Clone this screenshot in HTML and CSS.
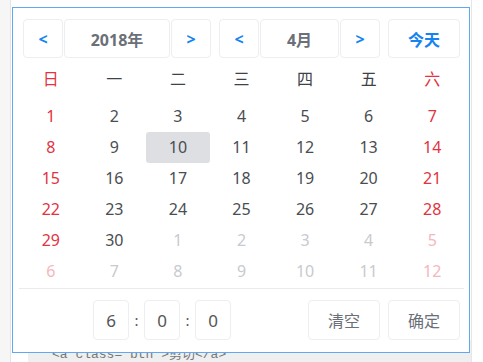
FILE: index.html
```html
<!DOCTYPE html>
<html lang="zh-CN">
<head>
    <meta charset="UTF-8">
    <meta name="viewport" content="width=device-width, initial-scale=1.0">
    <title>日期选择</title>
    <link rel="stylesheet" href="styles.css">
</head>
<body>
<div class="page">
    <div class="sidebar"></div>
    <div class="main">
        <pre class="code">&lt;a class="btn"&gt;剪切&lt;/a&gt;</pre>
    </div>
</div>

<div class="picker">
    <div class="picker-head">
        <div class="group">
            <button class="btn arrow">&lt;</button>
            <button class="btn year">2018年</button>
            <button class="btn arrow">&gt;</button>
        </div>
        <div class="group">
            <button class="btn arrow">&lt;</button>
            <button class="btn month">4月</button>
            <button class="btn arrow">&gt;</button>
        </div>
        <button class="btn today">今天</button>
    </div>

    <div class="week">
        <span class="red">日</span>
        <span>一</span>
        <span>二</span>
        <span>三</span>
        <span>四</span>
        <span>五</span>
        <span class="red">六</span>
    </div>

    <div class="days" id="days"></div>

    <div class="picker-foot">
        <div class="time">
            <span class="tbox">6</span>
            <span class="colon">:</span>
            <span class="tbox">0</span>
            <span class="colon">:</span>
            <span class="tbox">0</span>
        </div>
        <div class="actions">
            <button class="btn plain">清空</button>
            <button class="btn plain">确定</button>
        </div>
    </div>
</div>

<script>
    // April 2018 starts on a Sunday, 30 days, then next month fills the grid
    let days = document.getElementById('days');
    for (let i = 0; i < 42; i++) {
        let cell = document.createElement('span');
        let other = i >= 30;
        let num = other ? i - 29 : i + 1;
        cell.textContent = num;
        cell.className = 'day';
        if (i % 7 === 0 || i % 7 === 6) cell.className += ' red';
        if (other) cell.className += ' other';
        if (!other && num === 10) cell.className += ' active';
        days.appendChild(cell);
    }
</script>
</body>
</html>
```

FILE: styles.css
```css
body {
    margin: 0;
    background: #fff;
    font-family: "Noto Sans", "Noto Sans CJK SC", sans-serif;
}
.page {
    display: flex;
    height: 362px;
    overflow: hidden;
}
.sidebar {
    width: 10px;
    background: #f6f6f6;
    border-right: 1px solid #e4e4e4;
}
.main {
    width: 460px;
    border-right: 1px solid #e6e6e6;
    display: flex;
    flex-direction: column;
    justify-content: flex-end;
}
.code {
    margin: 0 0 -6px 17px;
    height: 28px;
    padding: 8px 0 0 24px;
    box-sizing: border-box;
    background: #efefef;
    color: #777;
    font-family: "Liberation Mono", "Noto Sans CJK SC", monospace;
    font-size: 13px;
    line-height: 14px;
}

.picker {
    position: absolute;
    left: 12px;
    top: 7px;
    width: 458px;
    height: 346px;
    box-sizing: border-box;
    background: #fff;
    border: 1px solid #5ea9f6;
}
.btn {
    height: 39px;
    padding: 0;
    background: #fff;
    border: 1px solid #eceef1;
    border-radius: 4px;
    font-family: "Noto Sans", "Noto Sans CJK SC", sans-serif;
    font-size: 16px;
    cursor: pointer;
}
.picker-head {
    display: flex;
    justify-content: space-between;
    padding: 11px 9px 0 10px;
}
.group {
    display: flex;
    gap: 1px;
}
.arrow {
    width: 40px;
    color: #1583f0;
    font-weight: bold;
    font-size: 16px;
}
.year {
    width: 106px;
    color: #6a6f78;
    font-weight: bold;
    font-size: 16px;
}
.month {
    width: 79px;
    color: #6a6f78;
    font-weight: bold;
}
.today {
    width: 72px;
    color: #1583f0;
    font-weight: bold;
}

.week, .days {
    display: grid;
    grid-template-columns: repeat(7, 1fr);
    padding: 0 5px 0 6px;
    text-align: center;
}
.week {
    margin-top: 6px;
    line-height: 31px;
    font-size: 16px;
    color: #3f4247;
}
.days {
    margin-top: 6px;
    font-size: 16px;
    color: #4a4d52;
}
.day {
    height: 31px;
    line-height: 31px;
    border-radius: 3px;
}
.red {
    color: #e2333f;
}
.other {
    color: #c8cace;
}
.other.red {
    color: #f4b7bc;
}
.active {
    background: #dddfe3;
}

.picker-foot {
    display: flex;
    justify-content: space-between;
    margin: 1px 5px 0 6px;
    padding: 11px 4px 0 74px;
    border-top: 1px solid #e8eaec;
}
.time {
    display: flex;
    align-items: center;
}
.tbox {
    width: 36px;
    height: 40px;
    line-height: 40px;
    box-sizing: border-box;
    border: 1px solid #eceef1;
    border-radius: 4px;
    text-align: center;
    font-size: 17px;
    color: #555;
}
.colon {
    width: 15px;
    text-align: center;
    color: #555;
    font-size: 15px;
}
.actions {
    display: flex;
    gap: 8px;
}
.plain {
    width: 72px;
    height: 40px;
    color: #6b7078;
}
```
